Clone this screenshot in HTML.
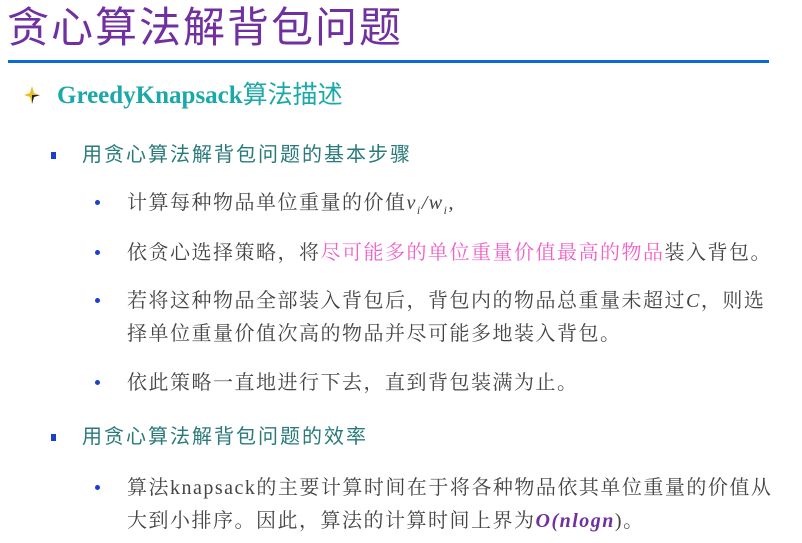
<!DOCTYPE html>
<html><head><meta charset="utf-8"><style>
body{margin:0;width:802px;height:543px;background:#fff;position:relative;overflow:hidden;font-family:"Liberation Serif","Noto Serif CJK SC",serif}
.a{position:absolute;white-space:nowrap;line-height:1}
.t{left:7px;top:7px;font-size:42px;color:#7030a0;font-family:"Liberation Sans","Noto Sans CJK SC",sans-serif;letter-spacing:2px}
.line{position:absolute;left:8px;top:60px;width:761px;height:3px;background:#0a6ad6}
.h{left:57px;top:83px;font-size:25px;font-weight:bold;color:#1aa8a8}
.s{left:82px;font-size:20px;color:#2a7a7a;letter-spacing:2px;font-family:"Liberation Sans","Noto Sans CJK SC",sans-serif}
.b{left:127px;font-size:20px;color:#444;letter-spacing:1.5px}
.sq{position:absolute;left:51px;width:5px;height:7px;background:#1a3fd0}
.dot{position:absolute;left:95px;width:5px;height:5px;border-radius:50%;background:#1a3fd0}
.pk{color:#f060c8}
</style></head><body>
<div class="a t">贪心算法解背包问题</div>
<div class="line"></div>
<svg style="position:absolute;left:24px;top:86px" width="16" height="18" viewBox="0 0 16 18"><path d="M8 0 L10 7 L16 9 L10 11 L8 18 L6 11 L0 9 L6 7Z" fill="#e8c020"/><path d="M8 9 L16 9 L10 11 L8 18Z" fill="#222"/></svg>
<div class="a h">GreedyKnapsack<span style="font-weight:normal;font-family:'Liberation Sans','Noto Sans CJK SC',sans-serif">算法描述</span></div>
<div class="sq" style="top:152px"></div>
<div class="a s" style="top:145px">用贪心算法解背包问题的基本步骤</div>
<div class="dot" style="top:200px"></div>
<div class="a b" style="top:193px">计算每种物品单位重量的价值<i>v<sub style="font-size:12px">i</sub>/w<sub style="font-size:12px">i</sub></i>,</div>
<div class="dot" style="top:250px"></div>
<div class="a b" style="top:243px">依贪心选择策略，将<span class="pk">尽可能多的单位重量价值最高的物品</span>装入背包。</div>
<div class="dot" style="top:298px"></div>
<div class="a b" style="top:291px">若将这种物品全部装入背包后，背包内的物品总重量未超过<i>C</i>，则选</div>
<div class="a b" style="top:324px">择单位重量价值次高的物品并尽可能多地装入背包。</div>
<div class="dot" style="top:380px"></div>
<div class="a b" style="top:373px">依此策略一直地进行下去，直到背包装满为止。</div>
<div class="sq" style="top:434px"></div>
<div class="a s" style="top:427px">用贪心算法解背包问题的效率</div>
<div class="dot" style="top:485px"></div>
<div class="a b" style="top:478px">算法knapsack的主要计算时间在于将各种物品依其单位重量的价值从</div>
<div class="a b" style="top:511px">大到小排序。因此，算法的计算时间上界为<i style="color:#7030a0;font-weight:bold">O(nlogn</i>)。</div>
</body></html>
